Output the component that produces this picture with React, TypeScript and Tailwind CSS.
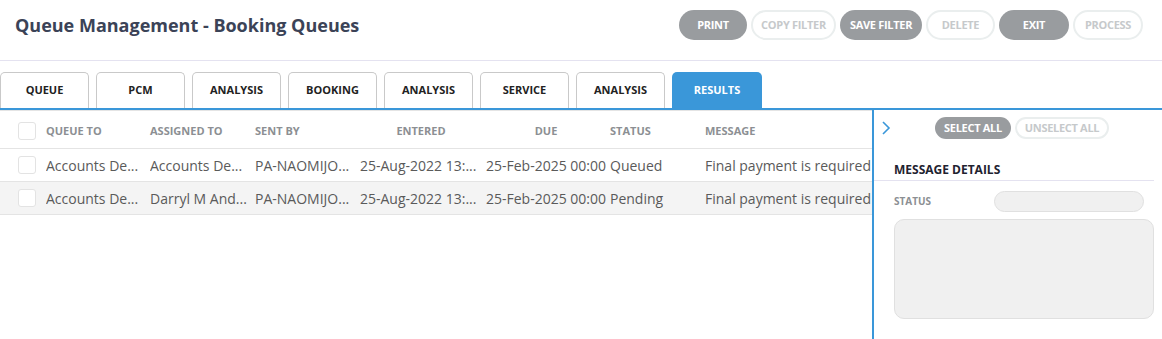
import React from "react";

const actions = [
  { label: "PRINT", filled: true, w: "w-[68px]" },
  { label: "COPY FILTER", filled: false, w: "w-[85px]" },
  { label: "SAVE FILTER", filled: true, w: "w-[82px]" },
  { label: "DELETE", filled: false, w: "w-[69px]" },
  { label: "EXIT", filled: true, w: "w-[70px]" },
  { label: "PROCESS", filled: false, w: "w-[70px]" },
];

const tabs = ["QUEUE", "PCM", "ANALYSIS", "BOOKING", "ANALYSIS", "SERVICE", "ANALYSIS", "RESULTS"];

const rows = [
  {
    queueTo: "Accounts De...",
    assignedTo: "Accounts De...",
    sentBy: "PA-NAOMIJO...",
    entered: "25-Aug-2022 13:...",
    due: "25-Feb-2025 00:00",
    status: "Queued",
    message: "Final payment is required",
  },
  {
    queueTo: "Accounts De...",
    assignedTo: "Darryl M And...",
    sentBy: "PA-NAOMIJO...",
    entered: "25-Aug-2022 13:...",
    due: "25-Feb-2025 00:00",
    status: "Pending",
    message: "Final payment is required",
  },
];

const Checkbox = () => (
  <div className="w-[18px] h-[18px] rounded-[3px] border border-[#e3e3e3] bg-white" />
);

const App = () => {
  return (
    <div className="w-[1162px] h-[339px] bg-white overflow-hidden font-['Open_Sans',sans-serif]">
      {/** Header --Start-- */}
      <div className="flex items-center justify-between h-[61px] pl-[15px] pr-[19px] border-b border-[#e4e2f0]">
        <h1 className="text-[18px] font-bold text-[#3b4357] -mt-[9px]">
          Queue Management - Booking Queues
        </h1>
        <div className="flex items-center gap-[4px] -mt-[10px]">
          {actions.map((a) => (
            <button
              key={a.label}
              className={`${a.w} h-[30px] rounded-full text-[11px] font-bold tracking-[-0.3px] ${
                a.filled
                  ? "bg-[#999c9f] text-white"
                  : "bg-white border-2 border-[#eaeeee] text-[#c6c9cb]"
              }`}
            >
              {a.label}
            </button>
          ))}
        </div>
      </div>
      {/** Header --End-- */}

      {/** Tabs --Start-- */}
      <div className="flex items-end gap-[7px] h-[49px] border-b-2 border-[#3a97d9]">
        {tabs.map((t, i) => {
          const active = i === tabs.length - 1;
          return (
            <div
              key={i}
              className={`h-[36px] flex items-center justify-center rounded-t-[5px] text-[11px] font-bold ${
                active
                  ? "w-[90px] bg-[#3a97d9] text-white"
                  : "w-[89px] border border-b-0 border-[#c9c9c9] text-[#222]"
              }`}
            >
              {t}
            </div>
          );
        })}
      </div>
      {/** Tabs --End-- */}

      <div className="flex h-[229px]">
        {/** Table --Start-- */}
        <div className="w-[872px]">
          <table className="w-full table-fixed border-t border-[#e4e4e4] border-collapse">
            <colgroup>
              <col className="w-[46px]" />
              <col className="w-[104px]" />
              <col className="w-[105px]" />
              <col className="w-[105px]" />
              <col className="w-[126px]" />
              <col className="w-[124px]" />
              <col className="w-[95px]" />
              <col />
            </colgroup>
            <thead>
              <tr className="h-[38px] border-b border-[#e4e4e4] text-[11px] font-bold text-[#8c8f93] [&>th]:pr-[4px] [&>th]:pt-[3px]">
                <th className="pl-[18px] text-left">
                  <Checkbox />
                </th>
                <th className="text-left">QUEUE TO</th>
                <th className="text-left">ASSIGNED TO</th>
                <th className="text-left">SENT BY</th>
                <th className="text-center">ENTERED</th>
                <th className="text-center">DUE</th>
                <th className="text-left">STATUS</th>
                <th className="text-left">MESSAGE</th>
              </tr>
            </thead>
            <tbody>
              {rows.map((r, i) => (
                <tr
                  key={i}
                  className={`h-[33px] border-b border-[#e4e4e4] text-[14px] text-[#5a5a5a] whitespace-nowrap [&>td]:pr-[4px] [&>td]:overflow-hidden ${
                    i % 2 === 1 ? "bg-[#f4f4f4]" : "bg-white"
                  }`}
                >
                  <td className="pl-[18px]">
                    <Checkbox />
                  </td>
                  <td>{r.queueTo}</td>
                  <td>{r.assignedTo}</td>
                  <td>{r.sentBy}</td>
                  <td>{r.entered}</td>
                  <td>{r.due}</td>
                  <td>{r.status}</td>
                  <td className="!pr-0">{r.message}</td>
                </tr>
              ))}
            </tbody>
          </table>
        </div>
        {/** Table --End-- */}

        {/** Details --Start-- */}
        <div className="flex-1 border-l-2 border-[#3a97d9] pr-[8px]">
          <div className="flex items-center h-[34px] pt-[2px]">
            <svg
              width="14"
              height="14"
              viewBox="0 0 14 14"
              className="ml-[5px] mr-[42px]"
              fill="none"
              stroke="#3a97d9"
              strokeWidth="1.6"
            >
              <path d="M4 1l6 6-6 6" />
            </svg>
            <div className="flex gap-[4px]">
              <button className="w-[76px] h-[22px] rounded-full bg-[#999c9f] text-white text-[11px] font-bold tracking-[-0.3px]">
                SELECT ALL
              </button>
              <button className="w-[94px] h-[22px] rounded-full border-2 border-[#eaeeee] text-[#c6c9cb] text-[11px] font-bold tracking-[-0.3px]">
                UNSELECT ALL
              </button>
            </div>
          </div>
          <div className="mt-[17px] pl-[20px] pb-[1px] border-b border-[#e4e2f0] text-[12px] font-bold text-[#1f2330]">
            MESSAGE DETAILS
          </div>
          <div className="flex items-center justify-between pl-[20px] pr-[10px] mt-[10px]">
            <span className="text-[10px] font-bold text-[#8c8f93]">STATUS</span>
            <div className="w-[150px] h-[21px] rounded-full bg-[#f0f0f0] border border-[#e0e0e0]" />
          </div>
          <div className="ml-[20px] mt-[7px] h-[100px] rounded-[10px] bg-[#f0f0f0] border border-[#e0e0e0]" />
        </div>
        {/** Details --End-- */}
      </div>
    </div>
  );
};

export default App;
